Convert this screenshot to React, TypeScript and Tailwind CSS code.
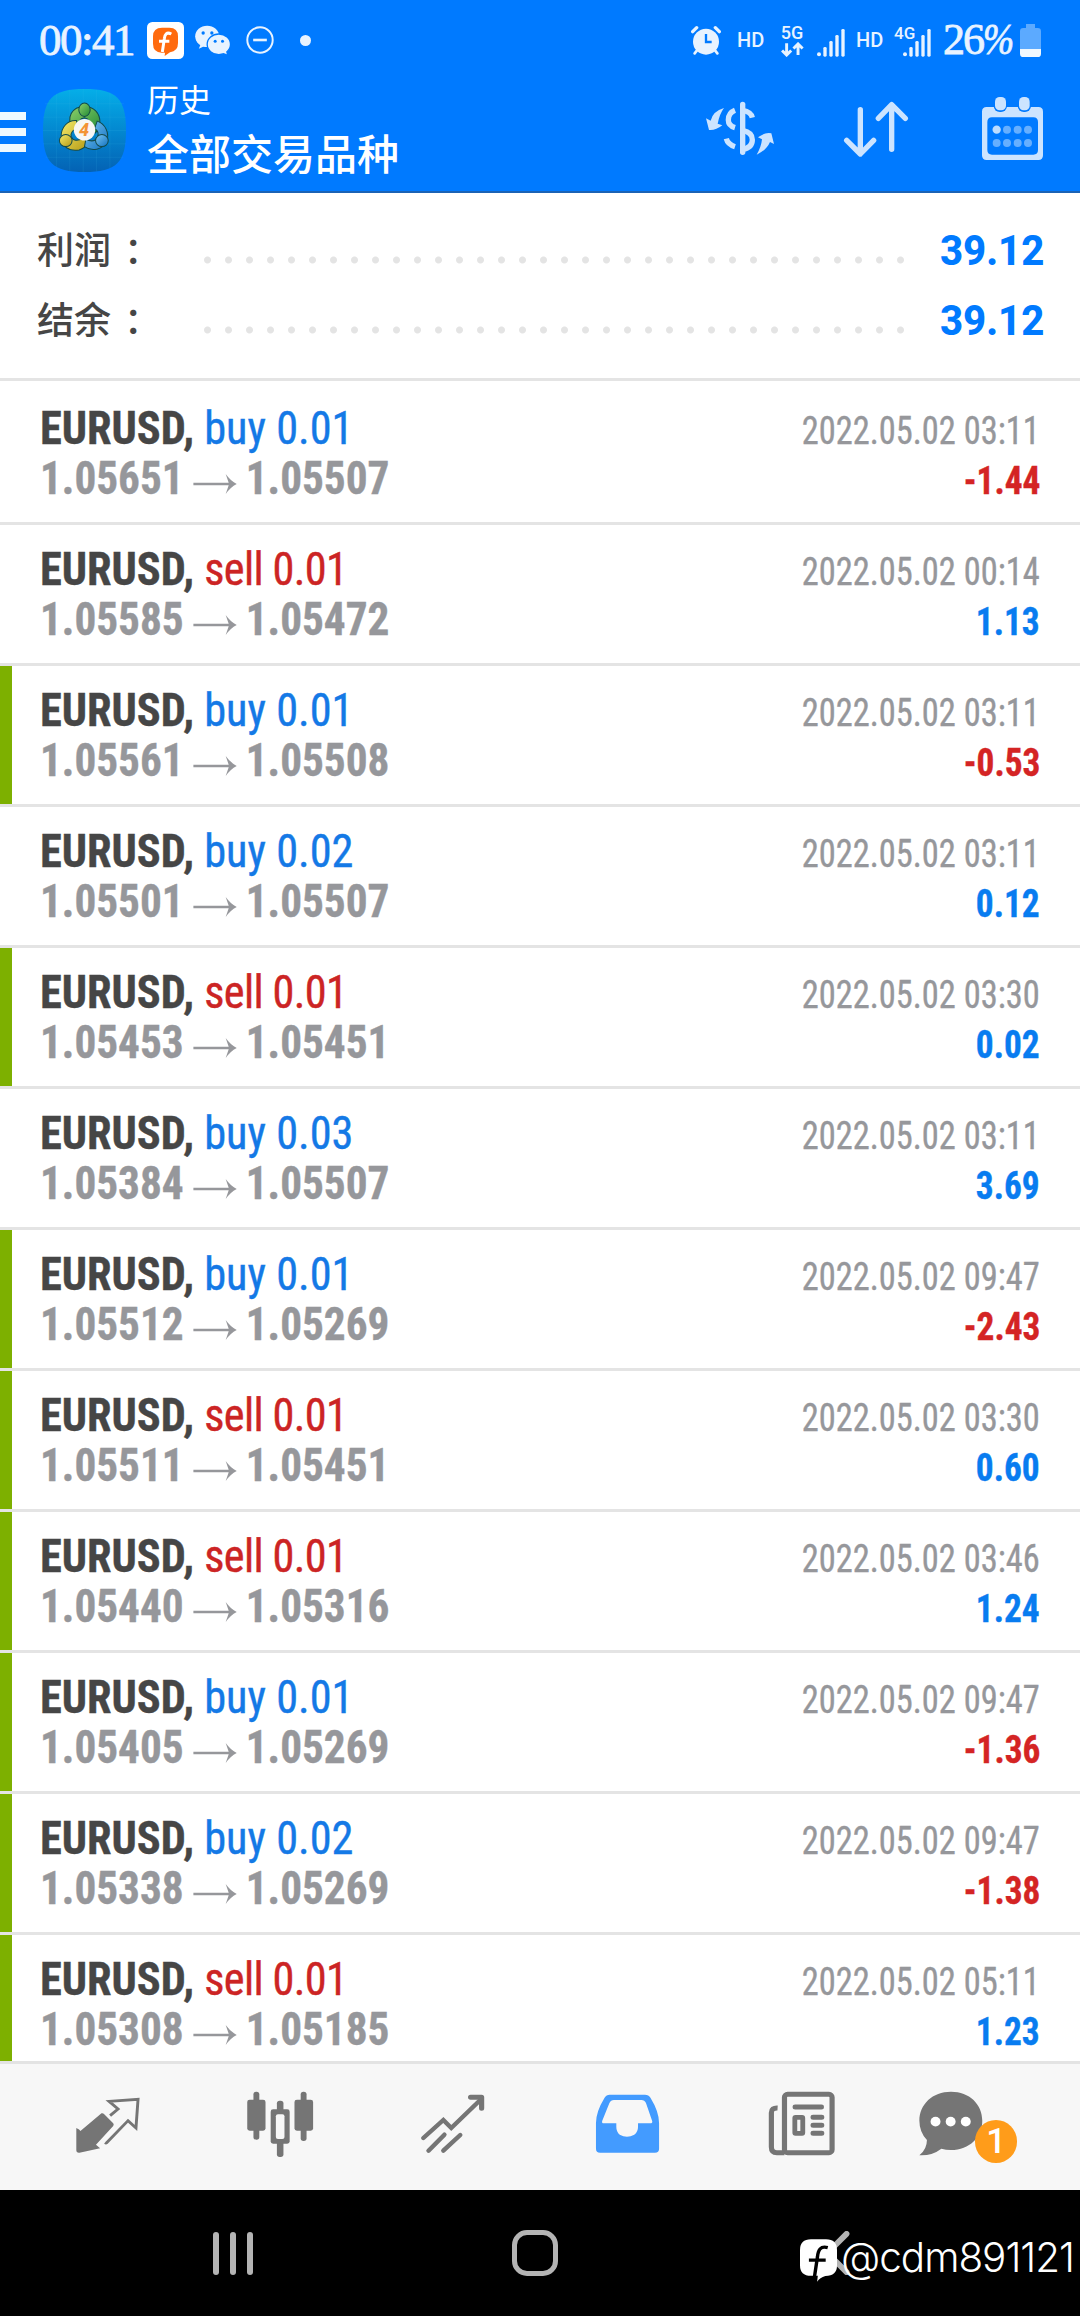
import type { ReactNode } from 'react'

interface Deal {
  side: 'buy' | 'sell'
  volume: string
  open: string
  close: string
  time: string
  profit: string
  marked?: boolean
}

const DEALS: Deal[] = [
  { side: 'buy', volume: '0.01', open: '1.05651', close: '1.05507', time: '2022.05.02 03:11', profit: '-1.44' },
  { side: 'sell', volume: '0.01', open: '1.05585', close: '1.05472', time: '2022.05.02 00:14', profit: '1.13' },
  { side: 'buy', volume: '0.01', open: '1.05561', close: '1.05508', time: '2022.05.02 03:11', profit: '-0.53', marked: true },
  { side: 'buy', volume: '0.02', open: '1.05501', close: '1.05507', time: '2022.05.02 03:11', profit: '0.12' },
  { side: 'sell', volume: '0.01', open: '1.05453', close: '1.05451', time: '2022.05.02 03:30', profit: '0.02', marked: true },
  { side: 'buy', volume: '0.03', open: '1.05384', close: '1.05507', time: '2022.05.02 03:11', profit: '3.69' },
  { side: 'buy', volume: '0.01', open: '1.05512', close: '1.05269', time: '2022.05.02 09:47', profit: '-2.43', marked: true },
  { side: 'sell', volume: '0.01', open: '1.05511', close: '1.05451', time: '2022.05.02 03:30', profit: '0.60', marked: true },
  { side: 'sell', volume: '0.01', open: '1.05440', close: '1.05316', time: '2022.05.02 03:46', profit: '1.24', marked: true },
  { side: 'buy', volume: '0.01', open: '1.05405', close: '1.05269', time: '2022.05.02 09:47', profit: '-1.36', marked: true },
  { side: 'buy', volume: '0.02', open: '1.05338', close: '1.05269', time: '2022.05.02 09:47', profit: '-1.38', marked: true },
  { side: 'sell', volume: '0.01', open: '1.05308', close: '1.05185', time: '2022.05.02 05:11', profit: '1.23', marked: true },
]

function SignalBars() {
  return (
    <svg viewBox="0 0 84 84" className="w-[28px] h-[28px]" fill="#e8f3ff">
      <circle cx="6" cy="76" r="6" />
      <rect x="19" y="54" width="10" height="29" rx="4" />
      <rect x="37" y="36" width="10" height="47" rx="4" />
      <rect x="55" y="18" width="10" height="65" rx="4" />
      <rect x="73" y="0" width="10" height="83" rx="4" />
    </svg>
  )
}

function StatusBar() {
  return (
    <div className="flex h-[80px] items-center pl-[39px] pr-[39px] text-[#e8f3ff]">
      <span className="w-[108px] font-['Liberation_Serif',serif] text-[45px] leading-none tracking-[-1.5px] [-webkit-text-stroke:0.8px_#e8f3ff]">00:41</span>
      <svg viewBox="441 66 111 111" className="h-[37px] w-[37px]">
        <rect x="441" y="66" width="111" height="111" rx="16" fill="#fff" />
        <path d="M486 83h22q26 0 26 26v20q0 25-24 28l-16 11 1-10h-10q-26-1-26-27v-22q0-26 27-26z" fill="#ff6a0d" />
        <path d="M514 102c-14-7-20 1-21 14l-6 40M477 124h31" stroke="#fff" strokeWidth="9" fill="none" />
      </svg>
      <svg viewBox="585 76 104 90" className="ml-[11px] h-[30px] w-[35px]" fill="#e8f3ff">
        <ellipse cx="621" cy="110" rx="36" ry="32" />
        <path d="M602 132l-6 15 19-9z" />
        <ellipse cx="656" cy="134" rx="35" ry="31" stroke="#007aff" strokeWidth="4" />
        <path d="M664 158l16 6-4-14z" />
        <g fill="#007aff">
          <circle cx="609" cy="100" r="5" />
          <circle cx="635" cy="100" r="5" />
          <circle cx="645" cy="125" r="4.500" />
          <circle cx="667" cy="125" r="4.500" />
        </g>
      </svg>
      <svg viewBox="737 80 86 86" className="ml-[16px] h-[28px] w-[28px]" fill="none" stroke="#e8f3ff">
        <circle cx="780" cy="123" r="39" strokeWidth="6" />
        <path d="M759 123h42" strokeWidth="8" />
      </svg>
      <span className="ml-[26px] h-[11px] w-[11px] rounded-full bg-[#e8f3ff]" />

      <div className="ml-auto flex items-center">
        <svg viewBox="92 76 90 90" className="h-[30px] w-[30px]" fill="none" stroke="#e8f3ff" strokeLinecap="round">
          <circle cx="137" cy="126" r="39" fill="#e8f3ff" stroke="none" />
          <path d="M97 96l12-12M177 96l-12-12" strokeWidth="10" />
          <path d="M110 152l-7 9M164 152l7 9" strokeWidth="8" />
          <path d="M137 103v24h17" stroke="#007aff" strokeWidth="7" strokeLinecap="butt" />
        </svg>
        <span className="ml-[16px] w-[29px] font-[Roboto,sans-serif] text-[20px] font-medium leading-none">HD</span>
        <div className="ml-[13px] flex w-[26px] flex-col items-center">
          <span className="font-[Roboto,sans-serif] text-[18px] font-medium leading-[18px]">5G</span>
          <svg viewBox="362 128 70 46" className="h-[15px] w-[23px]" fill="none" stroke="#e8f3ff" strokeWidth="9">
            <path d="M379 132v34M365 154l14 14 14-14M414 168v-34M400 148l14-14 14 14" />
          </svg>
        </div>
        <div className="ml-[12px] mt-[6px] flex">
          <SignalBars />
        </div>
        <span className="ml-[11px] w-[29px] font-[Roboto,sans-serif] text-[20px] font-medium leading-none">HD</span>
        <div className="relative ml-[18px] mt-[6px] flex">
          <span className="absolute left-[-9px] top-[-4px] font-[Roboto,sans-serif] text-[17px] font-medium leading-[17px]">4G</span>
          <SignalBars />
        </div>
        <span className="ml-[12px] w-[77px] whitespace-nowrap font-['Liberation_Serif',serif] text-[44px] leading-none tracking-[-2px] [-webkit-text-stroke:0.8px_#e8f3ff]">
          26<i className="inline-block w-[30px] origin-left scale-x-[0.85]">%</i>
        </span>
        <svg viewBox="0 0 63 99" className="h-[33px] w-[21px]">
          <path d="M18 0h27v12h8q10 0 10 10v54H0V22q0-10 10-10h8z" fill="#5caaff" />
          <path d="M0 75h63v14q0 10-10 10H10Q0 99 0 89z" fill="#f0f8ff" />
        </svg>
      </div>
    </div>
  )
}

function AppLogo() {
  return (
    <svg viewBox="128 266 248 248" className="h-[83px] w-[83px]">
      <defs>
        <linearGradient id="tile" x1="0" y1="0" x2="0" y2="1">
          <stop offset="0" stopColor="#05aee8" />
          <stop offset="0.5" stopColor="#0388d0" />
          <stop offset="1" stopColor="#0462b4" />
        </linearGradient>
        <linearGradient id="green" x1="0" y1="0" x2="1" y2="1">
          <stop offset="0" stopColor="#8ed06a" />
          <stop offset="1" stopColor="#1f8a35" />
        </linearGradient>
        <linearGradient id="yellow" x1="0" y1="0" x2="1" y2="1">
          <stop offset="0" stopColor="#f2ea6a" />
          <stop offset="1" stopColor="#b59a14" />
        </linearGradient>
        <linearGradient id="blue" x1="0" y1="0" x2="1" y2="1">
          <stop offset="0" stopColor="#7cc8f2" />
          <stop offset="1" stopColor="#0f6fc0" />
        </linearGradient>
      </defs>
      <path d="M252 266c96 0 124 28 124 124s-28 124-124 124-124-28-124-124 28-124 124-124z" fill="url(#tile)" />
      <path d="M168 280v220M208 268v244M248 266v248M288 268v244M328 278v224M134 310h236M128 350h248M128 390h248M128 430h248M136 470h232" stroke="#4cc0f0" strokeOpacity="0.18" strokeWidth="2" fill="none" />
      <g stroke="#134a4a" strokeWidth="3">
        <path d="M252 318c30 0 46 22 46 46 0 16-6 26-14 34l-16-14c4-20-4-30-16-32-14 2-20 12-18 32l-18-2c-18-28-4-64 36-64z" fill="url(#green)" />
        <path d="M228 360c-26-2-46 20-46 48 0 30 26 46 54 40 14-4 22-12 28-22l-18-14c-14 12-30 8-34-4-2-12 6-22 20-24z" fill="url(#yellow)" />
        <path d="M290 362c24 8 38 36 28 60-12 26-44 32-66 16l4-22c12 6 26 8 34-4 6-12 2-22-8-28z" fill="url(#blue)" />
        <ellipse cx="252" cy="328" rx="17" ry="20" fill="url(#green)" />
        <ellipse cx="196" cy="420" rx="19" ry="18" fill="url(#yellow)" />
        <ellipse cx="304" cy="420" rx="19" ry="18" fill="url(#blue)" />
      </g>
      <circle cx="252" cy="388" r="32" fill="#f7f7f4" />
      <text x="251" y="406" textAnchor="middle" fontFamily="Roboto, sans-serif" fontStyle="italic" fontWeight="800" fontSize="54" fill="#f39434">4</text>
    </svg>
  )
}

function Toolbar() {
  return (
    <div className="flex h-[111px] items-start">
      <div className="mt-[32px] flex w-[26px] flex-col gap-[8px]">
        <span className="h-[8px] bg-[#eef9ff]" />
        <span className="h-[8px] bg-[#eef9ff]" />
        <span className="h-[8px] bg-[#eef9ff]" />
      </div>
      <div className="ml-[17px] mt-[9px]">
        <AppLogo />
      </div>
      <div className="ml-[21px] flex flex-col font-['Noto_Sans_CJK_SC',sans-serif] text-white">
        <span className="text-[32px] leading-[36px]">历史</span>
        <span className="mt-[12px] text-[42px] font-medium leading-[48px]">全部交易品种</span>
      </div>
      <svg viewBox="132 300 216 168" className="ml-auto mt-[20px] h-[56px] w-[72px]" fill="none" stroke="#cce4ff" strokeWidth="16">
        <path d="M248 313v144" strokeLinecap="round" />
        <path d="M225 331q-20 8-20 29 0 17 20 23M277 353q-4-18-29-22M248 391q29 6 29 28 0 24-29 29M199 416q4 17 26 24" />
        <path d="M192 324q-34 10-40 38l-14-7 9 35q20 2 40-14l-14-5q6-30 19-47zM290 464q30-14 40-38l12 6-8-32q-20-4-40 12l12 6q-2 22-16 46z" fill="#cce4ff" stroke="none" />
      </svg>
      <svg viewBox="546 300 204 174" className="ml-[66px] mt-[20px] h-[58px] w-[68px]" fill="none" stroke="#cce4ff" strokeWidth="16" strokeLinecap="round" strokeLinejoin="round">
        <path d="M601 329v132M560 421l41 41 40-41M695 448V315M655 355l40-41 41 41" />
      </svg>
      <svg viewBox="960 285 195 201" className="ml-[70px] mr-[35px] mt-[15px] h-[67px] w-[65px]">
        <path fillRule="evenodd" d="M980 321h155q14 0 14 14v131q0 14-14 14H980q-14 0-14-14V335q0-14 14-14zm16 31q-14 0-14 14v84q0 14 14 14h124q14 0 14-14v-84q0-14-14-14z" fill="#cce4ff" />
        <rect x="1001" y="288" width="40" height="48" rx="18" fill="#007aff" />
        <rect x="1073" y="288" width="40" height="48" rx="18" fill="#007aff" />
        <rect x="1005" y="291" width="33" height="40" rx="14" fill="#cce4ff" />
        <rect x="1077" y="291" width="32" height="40" rx="14" fill="#cce4ff" />
        <circle cx="1010" cy="389" r="12.500" fill="#bcdcff" />
        <g fill="#66afff">
          <circle cx="1041" cy="389" r="12" />
          <circle cx="1073" cy="389" r="12" />
          <circle cx="1104" cy="389" r="12" />
          <circle cx="1010" cy="429" r="12" />
          <circle cx="1041" cy="429" r="12" />
          <circle cx="1073" cy="429" r="12" />
          <circle cx="1104" cy="429" r="12" />
        </g>
      </svg>
    </div>
  )
}

function SummaryRow({ label, value }: { label: string; value: string }) {
  return (
    <div className="flex h-[70px] items-center pl-[37px] pr-[36px]">
      <span className="mb-[4px] w-[160px] font-['Noto_Sans_CJK_SC',sans-serif] text-[37px] font-medium leading-none text-[#464646]">
        {label}
        <span className="ml-[13px]">：</span>
      </span>
      <span className="mt-[19px] h-[10px] w-[714px] bg-[radial-gradient(circle,#e4e4e4_3px,transparent_4px)] bg-size-[21px_10px]" />
      <span className="ml-auto mt-[2px] origin-right scale-x-[0.955] font-[Roboto,sans-serif] text-[42px] font-extrabold leading-none text-[#007aff]">
        {value}
      </span>
    </div>
  )
}

function DealRow({ deal }: { deal: Deal }) {
  const sideColor = deal.side === 'buy' ? 'text-[#1479e6]' : 'text-[#cc2424] tracking-[-0.7px]'
  const profitColor = deal.profit.startsWith('-') ? 'text-[#d42424]' : 'text-[#087cf0]'

  return (
    <div className="flex h-[141px] shrink-0 border-b-[3px] border-[#e4e4e4]">
      <div className={`w-[12px] ${deal.marked ? 'bg-[#7db000]' : ''}`} />
      <div className="flex flex-1 flex-col pl-[28px] pr-[40px] pt-[19px] font-['Roboto_Condensed',Roboto,sans-serif] font-stretch-condensed [-webkit-text-stroke-width:0.4px]">
        <div className="flex h-[50px] items-baseline justify-between leading-[50px]">
          <span className="origin-left scale-x-[0.943] text-[47px]">
            <span className="font-bold text-[#464646]">EURUSD,</span> <span className={sideColor}>{deal.side} {deal.volume}</span>
          </span>
          <span className="origin-right scale-x-[0.882] text-[39px] text-[#96979b]">{deal.time}</span>
        </div>
        <div className="flex h-[50px] items-baseline justify-between leading-[50px]">
          <span className="flex origin-left scale-x-[0.94] items-baseline text-[46px] font-bold text-[#96979b]">
            {deal.open}
            <svg viewBox="0 0 132 60" preserveAspectRatio="none" className="mb-[4px] ml-[10px] mr-[9px] h-[20px] w-[47px]">
              <path d="M0 26h106L97 0q14 20 33 30-19 10-33 30l9-26H0z" fill="#96979b" />
            </svg>
            {deal.close}
          </span>
          <span className={`origin-right scale-x-[0.93] text-[38px] font-bold ${profitColor}`}>{deal.profit}</span>
        </div>
      </div>
    </div>
  )
}

function Tab({ children }: { children: ReactNode }) {
  return <div className="flex items-center justify-center">{children}</div>
}

function TabBar() {
  return (
    <div className="grid h-[129px] shrink-0 grid-cols-6 border-t-[3px] border-[#e3e3e3] bg-[#f7f7f7] px-[20px]">
      <Tab>
        <svg viewBox="194 145 232 232" preserveAspectRatio="none" className="h-[77.300px] w-[80px]">
          <path d="M294 221q4-2 8 3l26 27q3 4 0 8l-50 56 12 11-60 13q-9 1-9-8v-66q10 4 12 9z" fill="#757575" />
          <path d="M319 228l23-20-26-23 84-6-6 86-23-22-62 66q-2 2-5 0" fill="none" stroke="#757575" strokeWidth="8.500" />
        </svg>
      </Tab>
      <Tab>
        <svg viewBox="697 145 232 232" preserveAspectRatio="none" className="h-[77.300px] w-[80px]" fill="#757575">
          <rect x="736" y="156" width="17" height="144" rx="8" />
          <rect x="718" y="180" width="53" height="93" rx="7" />
          <rect x="873" y="156" width="17" height="148" rx="8" />
          <rect x="855" y="180" width="54" height="93" rx="7" />
          <rect x="804" y="183" width="19" height="169" rx="8" />
          <rect x="786" y="209" width="55" height="103" rx="7" />
          <rect x="801" y="224" width="25" height="74" rx="6" fill="#f7f7f7" />
        </svg>
      </Tab>
      <Tab>
        <svg viewBox="1200 145 232 232" preserveAspectRatio="none" className="h-[77.300px] w-[80px]" fill="none" stroke="#757575" strokeWidth="13">
          <path d="M1230 295l58-54 23 24 84-84" strokeLinecap="round" />
          <path d="M1367 173h32v33" strokeWidth="15" strokeLinecap="round" strokeLinejoin="round" />
          <path d="M1245 333l46-48M1288 333l49-47" strokeLinecap="round" />
        </svg>
      </Tab>
      <Tab>
        <svg viewBox="136 145 232 232" preserveAspectRatio="none" className="h-[77.300px] w-[80px]">
          <path fillRule="evenodd" d="M202 165h102q11 0 16 9 25 42 25 76v77q0 12-12 12H174q-12 0-12-12v-77q0-34 25-76 5-9 15-9zm12 16q-9 0-13 9l-21 54q-2 7 5 7h36v10q0 16 10 24 21 13 42 0 11-8 11-24v-10h35q8 0 6-7l-18-54q-4-9-13-9z" fill="#439bff" />
        </svg>
      </Tab>
      <Tab>
        <svg viewBox="639 145 232 232" preserveAspectRatio="none" className="h-[77.300px] w-[80px]" fill="none" stroke="#757575">
          <rect x="710" y="164" width="138" height="175" rx="9" strokeWidth="15" />
          <path d="M690 205q-18-1-18 14v103q0 17 16 17h22" strokeWidth="15" />
          <path d="M741 202h76M793 233h25M793 257h25M793 281h25" strokeWidth="15" strokeLinecap="round" />
          <rect x="740" y="233" width="23" height="48" rx="2" strokeWidth="14" />
        </svg>
      </Tab>
      <Tab>
        <div className="relative">
          <svg viewBox="1098 145 320 232" preserveAspectRatio="none" className="h-[77.300px] w-[110px]">
            <path d="M1194 156c54 0 91 38 91 87s-37 88-91 88q-15 0-28-4-28 22-64 20 22-18 22-46-22-24-22-58c0-49 38-87 92-87z" fill="#757575" />
            <circle cx="1149" cy="246" r="14.500" fill="#fff" />
            <circle cx="1193" cy="246" r="14.500" fill="#fff" />
            <circle cx="1237" cy="246" r="14.500" fill="#fff" />
          </svg>
          <span className="absolute left-[57px] top-[32px] flex h-[43px] w-[42px] items-center justify-center rounded-full bg-[#ff9c1a] font-[Roboto,sans-serif] text-[35px] font-medium leading-none text-white">
            1
          </span>
        </div>
      </Tab>
    </div>
  )
}

function SystemNav() {
  return (
    <div className="relative grid h-[126px] shrink-0 grid-cols-3 bg-black pl-[82px] pr-[92px]">
      <div className="flex items-center justify-center gap-[11px]">
        <span className="h-[43px] w-[6px] rounded-full bg-[#b4b4b4]" />
        <span className="h-[43px] w-[6px] rounded-full bg-[#b4b4b4]" />
        <span className="h-[43px] w-[6px] rounded-full bg-[#b4b4b4]" />
      </div>
      <div className="flex items-center justify-center">
        <span className="h-[46px] w-[46px] rounded-[15px] border-[5px] border-[#b4b4b4]" />
      </div>
      <div className="flex items-center justify-center">
        <svg viewBox="0 0 26 46" className="h-[44px] w-[26px]" fill="none" stroke="#b4b4b4" strokeWidth="6" strokeLinecap="round">
          <path d="M23 3L3 23l20 20" />
        </svg>
      </div>
      <div className="absolute right-0 top-[41px] flex items-center">
        <svg viewBox="753 590 108 130" preserveAspectRatio="none" className="mt-[8px] h-[43px] w-[37px]">
          <path d="M785 591h44q32 0 32 32v48q0 30-34 31-16 5-24 17l2-18h-20q-32 0-32-32v-46q0-32 32-32z" fill="#fff" />
          <path d="M834 616c-22-6-28 8-30 28l-9 62M779 654h49" fill="none" stroke="#000" strokeWidth="10" />
        </svg>
        <span className="ml-[4px] w-[239px] origin-left scale-x-[0.985] whitespace-nowrap font-[Inter,sans-serif] text-[41px] font-light leading-[46px] tracking-[-1px] text-white">
          @cdm891121
        </span>
      </div>
    </div>
  )
}

export default function App() {
  return (
    <div className="flex h-[2316px] w-[1080px] flex-col overflow-hidden bg-white">
      <header className="h-[193px] shrink-0 border-b-2 border-[#1b63b5] bg-[#007aff]">
        <StatusBar />
        <Toolbar />
      </header>
      <section className="h-[188px] shrink-0 border-b-[3px] border-[#e4e4e4] pt-[22px]">
        <SummaryRow label="利润" value="39.12" />
        <SummaryRow label="结余" value="39.12" />
      </section>
      <main className="flex min-h-0 flex-1 flex-col overflow-hidden pt-[3px]">
        {DEALS.map((deal, i) => (
          <DealRow key={i} deal={deal} />
        ))}
      </main>
      <TabBar />
      <SystemNav />
    </div>
  )
}
